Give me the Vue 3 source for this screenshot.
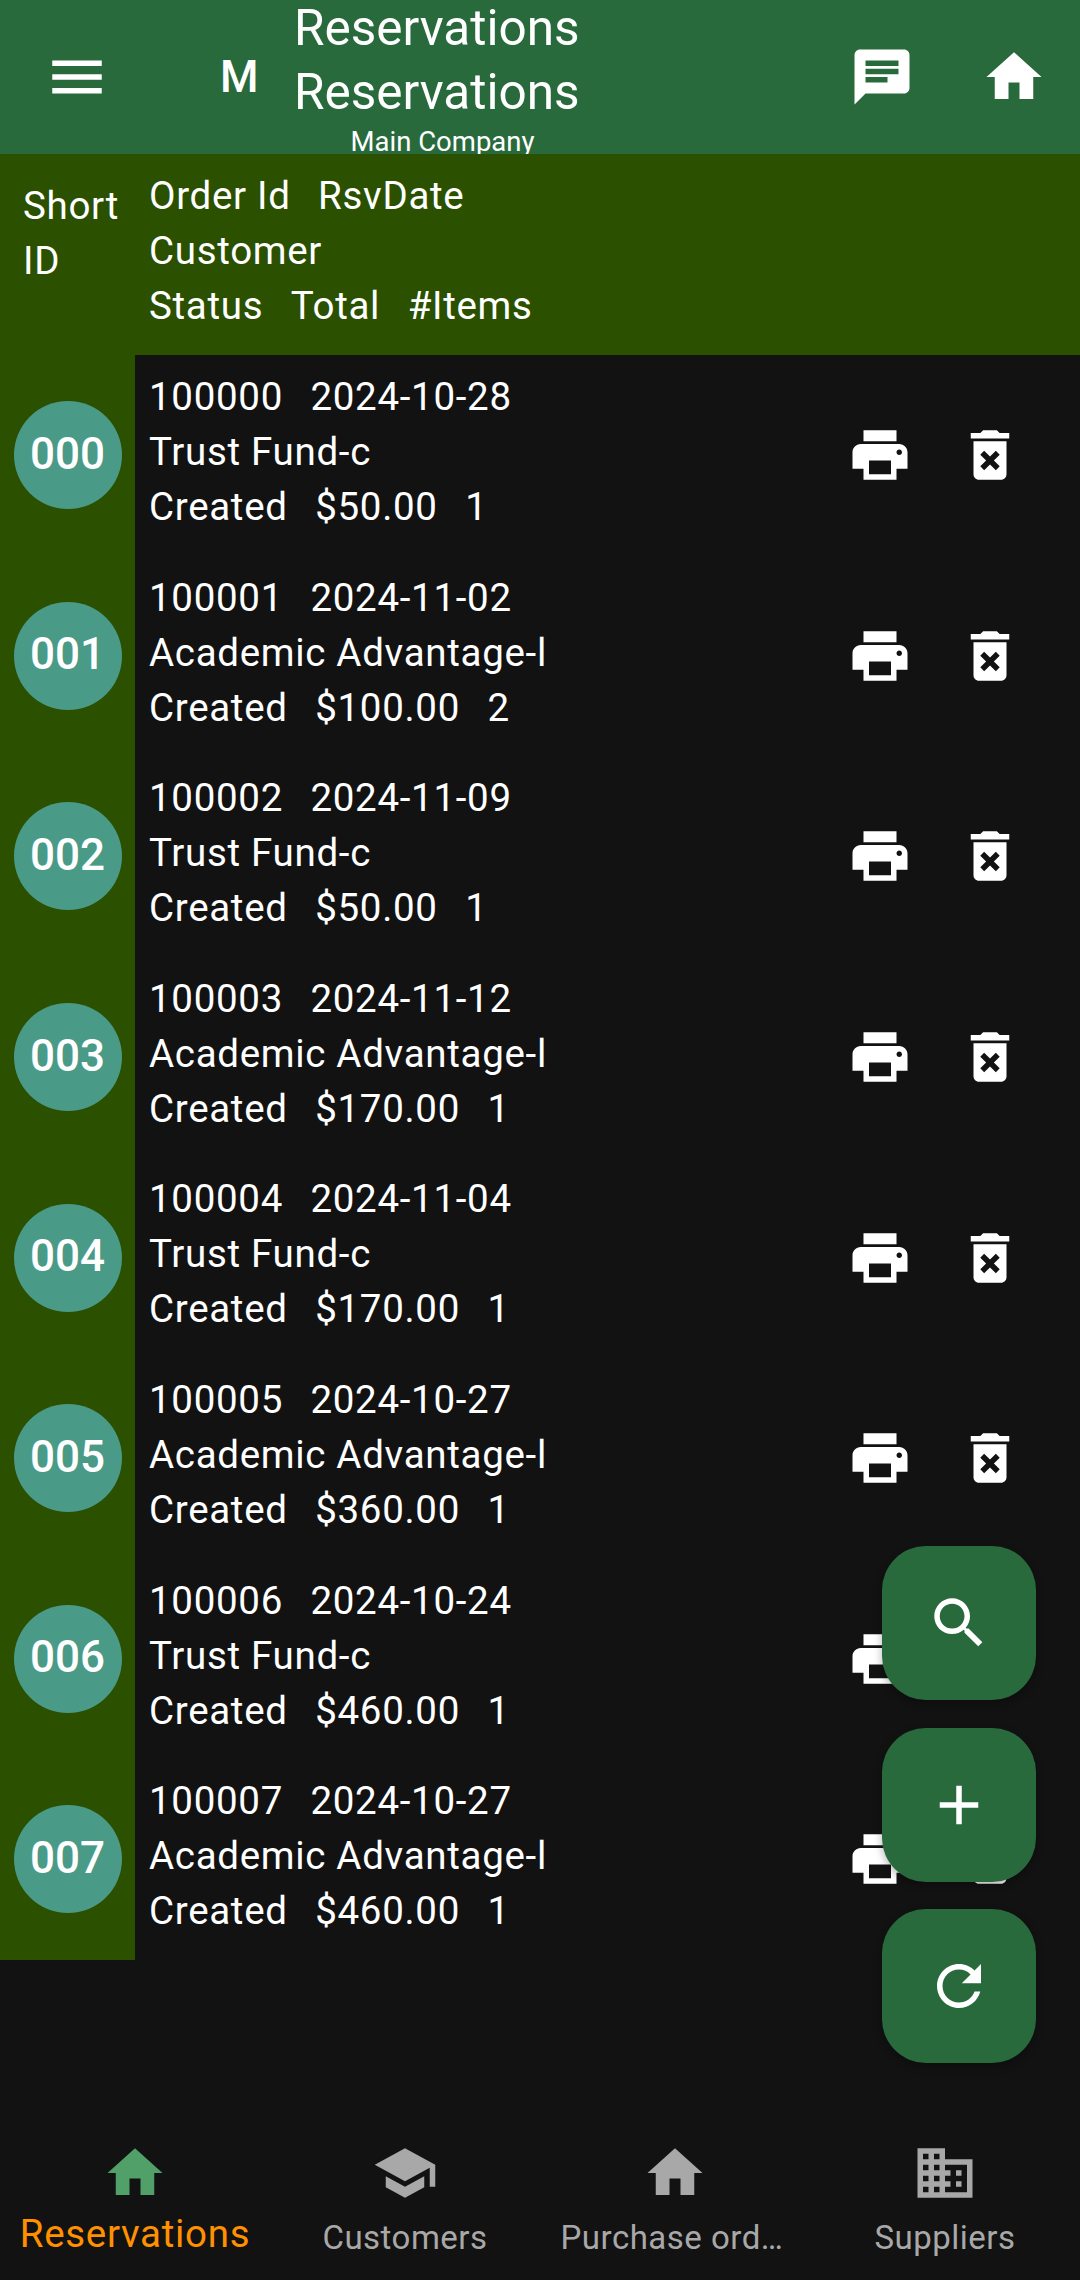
<template>
  <div class="screen">
    <header class="appbar">
      <button class="appbar__menu">
        <svg class="icon" viewBox="0 0 24 24"><path :d="icons.menu" /></svg>
      </button>
      <span class="appbar__m">M</span>
      <div class="appbar__title">
        <div class="appbar__line">Reservations</div>
        <div class="appbar__line">Reservations</div>
        <div class="appbar__company">Main Company</div>
      </div>
      <button class="appbar__action">
        <svg class="icon" viewBox="0 0 24 24"><path :d="icons.chat" /></svg>
      </button>
      <button class="appbar__action">
        <svg class="icon" viewBox="0 0 24 24"><path :d="icons.home" /></svg>
      </button>
    </header>

    <section class="heading">
      <div class="heading__short">Short ID</div>
      <div class="heading__cols">
        <div class="line"><span>Order Id</span><span>RsvDate</span></div>
        <div class="line">Customer</div>
        <div class="line"><span>Status</span><span>Total</span><span>#Items</span></div>
      </div>
    </section>

    <main class="list">
      <div v-for="row in rows" :key="row.id" class="row">
        <div class="row__lead">
          <div class="row__avatar">{{ row.short }}</div>
        </div>
        <div class="row__body">
          <div class="row__text">
            <div class="line"><span>{{ row.id }}</span><span>{{ row.date }}</span></div>
            <div class="line">{{ row.customer }}</div>
            <div class="line"><span>Created</span><span>{{ row.total }}</span><span>{{ row.items }}</span></div>
          </div>
          <div class="row__actions">
            <button class="row__action">
              <svg class="icon" viewBox="0 0 24 24"><path :d="icons.print" /></svg>
            </button>
            <button class="row__action">
              <svg class="icon" viewBox="0 0 24 24"><path :d="icons.trash" /></svg>
            </button>
          </div>
        </div>
      </div>
    </main>

    <div class="fabs">
      <button v-for="fab in fabs" :key="fab" class="fab">
        <svg class="icon" viewBox="0 0 24 24"><path :d="icons[fab]" /></svg>
      </button>
    </div>

    <nav class="nav">
      <div
        v-for="(item, i) in navItems"
        :key="item.label"
        class="nav__item"
        :class="{ 'is-active': i === 0 }"
      >
        <svg class="icon" viewBox="0 0 24 24"><path :d="icons[item.icon]" /></svg>
        <span class="nav__label">{{ item.label }}</span>
      </div>
    </nav>
  </div>
</template>

<script setup>
const icons = {
  menu: "M3 18h18v-2H3v2zm0-5h18v-2H3v2zm0-7v2h18V6H3z",
  chat: "M20 2H4c-1.1 0-1.99.9-1.99 2L2 22l4-4h14c1.1 0 2-.9 2-2V4c0-1.1-.9-2-2-2zM6 9h12v2H6V9zm8 5H6v-2h8v2zm4-6H6V6h12v2z",
  home: "M10 20v-6h4v6h5v-8h3L12 3 2 12h3v8z",
  print:
    "M19 8H5c-1.66 0-3 1.34-3 3v6h4v4h12v-4h4v-6c0-1.66-1.34-3-3-3zm-3 11H8v-5h8v5zm3-7c-.55 0-1-.45-1-1s.45-1 1-1 1 .45 1 1-.45 1-1 1zm-1-9H6v4h12V3z",
  trash:
    "M6 19c0 1.1.9 2 2 2h8c1.1 0 2-.9 2-2V7H6v12zm2.46-7.12l1.41-1.41L12 12.59l2.12-2.12 1.41 1.41L13.41 14l2.12 2.12-1.41 1.41L12 15.41l-2.12 2.12-1.41-1.41L10.59 14l-2.13-2.12zM15.5 4l-1-1h-5l-1 1H5v2h14V4z",
  search:
    "M15.5 14h-.79l-.28-.27C15.41 12.59 16 11.11 16 9.5 16 5.91 13.09 3 9.5 3S3 5.91 3 9.5 5.91 16 9.5 16c1.61 0 3.09-.59 4.23-1.57l.27.28v.79l5 4.99L20.49 19l-4.99-5zm-6 0C7.01 14 5 11.99 5 9.5S7.01 5 9.5 5 14 7.01 14 9.5 11.99 14 9.5 14z",
  add: "M19 13h-6v6h-2v-6H5v-2h6V5h2v6h6v2z",
  refresh:
    "M17.65 6.35C16.2 4.9 14.21 4 12 4c-4.42 0-7.99 3.58-7.99 8s3.57 8 7.99 8c3.73 0 6.84-2.55 7.73-6h-2.08c-.82 2.33-3.04 4-5.65 4-3.31 0-6-2.69-6-6s2.69-6 6-6c1.66 0 3.14.69 4.22 1.78L13 11h7V4l-2.35 2.35z",
  school:
    "M5 13.18v4L12 21l7-3.82v-4L12 17l-7-3.82zM12 3L1 9l11 6 9-4.91V17h2V9L12 3z",
  business:
    "M12 7V3H2v18h20V7H12zM6 19H4v-2h2v2zm0-4H4v-2h2v2zm0-4H4V9h2v2zm0-4H4V5h2v2zm4 12H8v-2h2v2zm0-4H8v-2h2v2zm0-4H8V9h2v2zm0-4H8V5h2v2zm10 12h-8v-2h2v-2h-2v-2h2v-2h-2V9h8v10zm-2-8h-2v2h2v-2zm0 4h-2v2h2v-2z",
};

const trust = "Trust Fund-c";
const academic = "Academic Advantage-l";

const rows = [
  { short: "000", id: 100000, date: "2024-10-28", customer: trust, total: "$50.00", items: 1 },
  { short: "001", id: 100001, date: "2024-11-02", customer: academic, total: "$100.00", items: 2 },
  { short: "002", id: 100002, date: "2024-11-09", customer: trust, total: "$50.00", items: 1 },
  { short: "003", id: 100003, date: "2024-11-12", customer: academic, total: "$170.00", items: 1 },
  { short: "004", id: 100004, date: "2024-11-04", customer: trust, total: "$170.00", items: 1 },
  { short: "005", id: 100005, date: "2024-10-27", customer: academic, total: "$360.00", items: 1 },
  { short: "006", id: 100006, date: "2024-10-24", customer: trust, total: "$460.00", items: 1 },
  { short: "007", id: 100007, date: "2024-10-27", customer: academic, total: "$460.00", items: 1 },
];

const fabs = ["search", "add", "refresh"];

const navItems = [
  { label: "Reservations", icon: "home" },
  { label: "Customers", icon: "school" },
  { label: "Purchase orders", icon: "home" },
  { label: "Suppliers", icon: "business" },
];
</script>

<style>
html,
body {
  margin: 0;
  background: #121212;
}
</style>

<style scoped>
.screen {
  position: relative;
  display: flex;
  flex-direction: column;
  width: 1080px;
  height: 2280px;
  overflow: hidden;
  background: #121212;
  color: #fff;
  font-family: Roboto, "Liberation Sans", sans-serif;
}

button {
  display: flex;
  align-items: center;
  justify-content: center;
  padding: 0;
  border: 0;
  background: none;
  color: inherit;
}

.icon {
  display: block;
  width: 66px;
  height: 66px;
  fill: currentColor;
}

.line {
  display: flex;
  gap: 27.5px;
  height: 55px;
  font-size: 38.5px;
  line-height: 55px;
  letter-spacing: 0.69px;
  white-space: pre;
}

.appbar {
  display: flex;
  flex: none;
  align-items: center;
  height: 154px;
  background: #296a3d;
}

.appbar__menu {
  flex: none;
  width: 154px;
  height: 154px;
}

.appbar__m {
  box-sizing: border-box;
  width: 141px;
  padding-left: 66px;
  font-size: 44px;
  font-weight: 500;
}

.appbar__title {
  flex: 1;
  align-self: flex-start;
  margin-top: -4px;
  margin-left: -1px;
}

.appbar__line {
  height: 64px;
  font-size: 49.5px;
  line-height: 64px;
}

.appbar__company {
  width: 297px;
  height: 30px;
  margin-top: 3px;
  font-size: 27.5px;
  line-height: 30px;
  text-align: center;
}

.appbar__action {
  flex: none;
  width: 132px;
  height: 154px;
}

.heading {
  display: flex;
  flex: none;
  height: 201px;
  background: #2b5000;
}

.heading__short {
  flex: none;
  box-sizing: border-box;
  width: 135px;
  padding: 24px 0 0 23px;
  font-size: 38.5px;
  line-height: 55px;
  letter-spacing: 0.69px;
}

.heading__cols {
  padding: 14px 0 0 14px;
}

.list {
  flex: none;
}

.row {
  display: flex;
  height: 200.6px;
}

.row__lead {
  display: flex;
  flex: none;
  align-items: center;
  justify-content: center;
  width: 135px;
  background: #2b5000;
}

.row__avatar {
  display: flex;
  align-items: center;
  justify-content: center;
  box-sizing: border-box;
  width: 108px;
  height: 108px;
  padding-bottom: 3px;
  border-radius: 50%;
  background: #4a9a88;
  font-size: 44px;
  font-weight: 500;
}

.row__body {
  display: flex;
  flex: 1;
  align-items: center;
  padding-left: 14px;
}

.row__text {
  flex: 1;
  align-self: flex-start;
  padding-top: 14px;
}

.row__actions {
  display: flex;
  padding-right: 35px;
}

.row__action {
  width: 110px;
  height: 110px;
}

.fabs {
  position: absolute;
  top: 1546px;
  right: 44px;
  display: flex;
  flex-direction: column;
  gap: 27.5px;
}

.fab {
  width: 154px;
  height: 154px;
  border-radius: 44px;
  background: #296a3d;
  box-shadow: 0 3px 8px rgba(0, 0, 0, 0.3);
}

.nav {
  display: flex;
  flex: none;
  margin-top: auto;
  height: 140px;
}

.nav__item {
  display: flex;
  flex: 1;
  flex-direction: column;
  align-items: center;
  min-width: 0;
  color: #a8a8a8;
}

.nav__item .icon {
  flex: none;
}

.nav__label {
  max-width: 229px;
  margin-top: 11px;
  overflow: hidden;
  font-size: 33px;
  line-height: 42px;
  letter-spacing: 0.5px;
  text-overflow: ellipsis;
  white-space: nowrap;
}

.nav__item.is-active {
  color: #ff9100;
}

.nav__item.is-active .icon {
  color: #519f69;
}

.nav__item.is-active .nav__label {
  max-width: none;
  margin-top: 7px;
  overflow: visible;
  font-size: 38.5px;
  letter-spacing: 0.69px;
}
</style>
